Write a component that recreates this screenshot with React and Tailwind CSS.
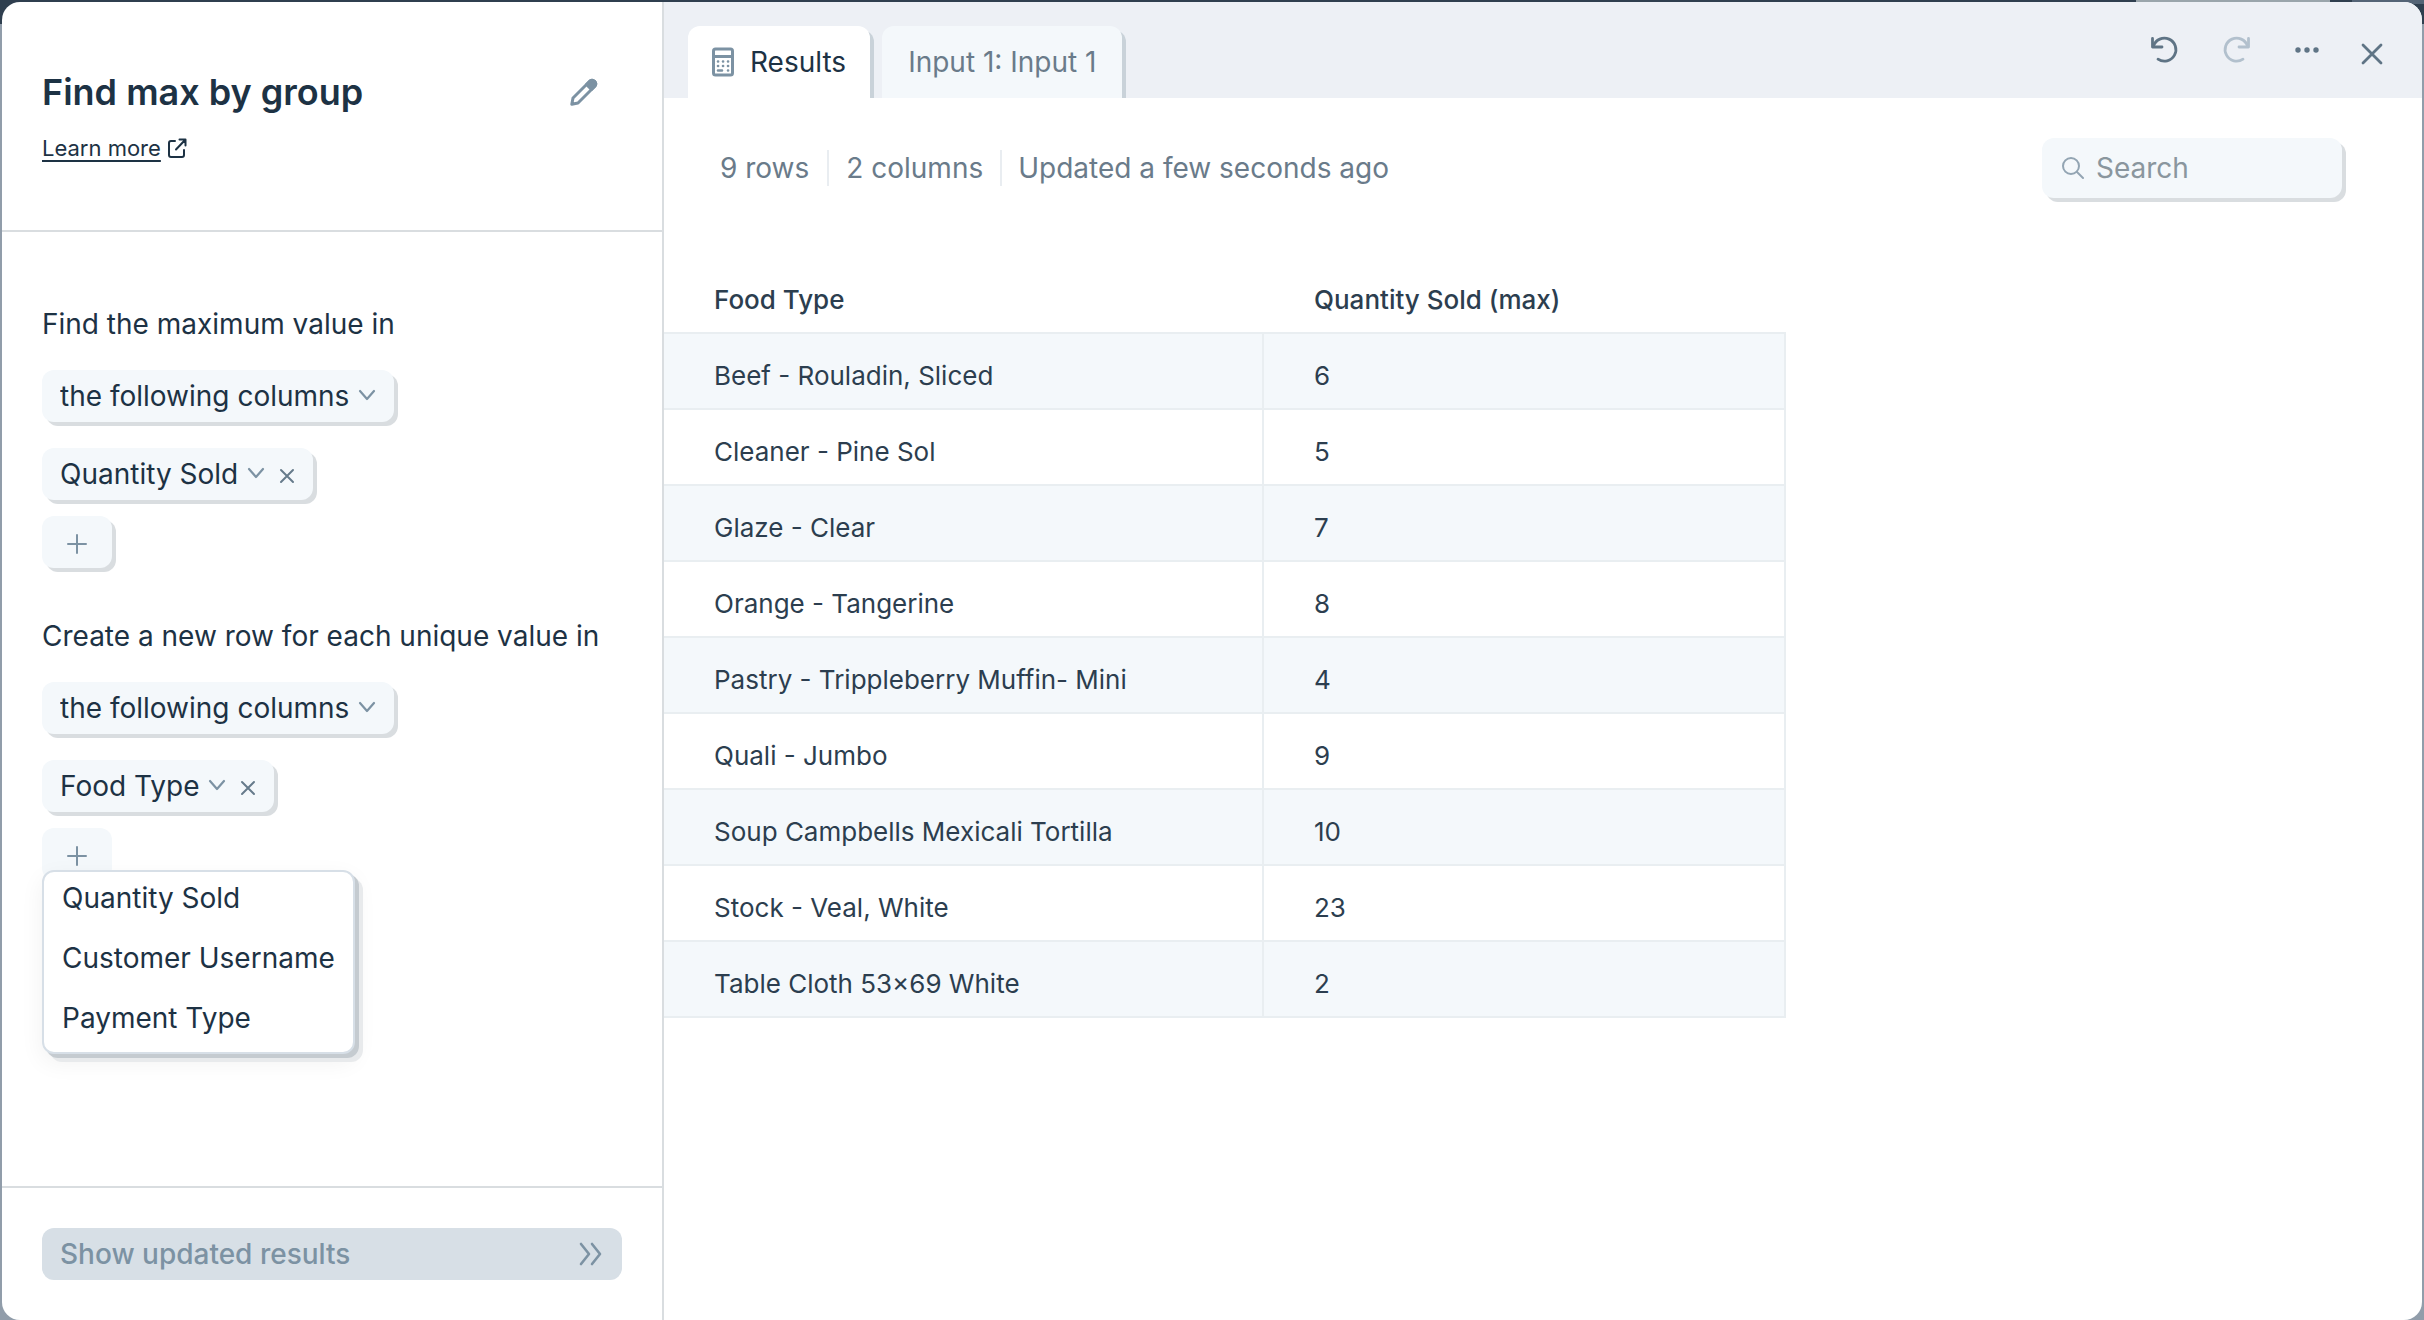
import { useState } from "react";

const rows = [
  ["Beef - Rouladin, Sliced", 6],
  ["Cleaner - Pine Sol", 5],
  ["Glaze - Clear", 7],
  ["Orange - Tangerine", 8],
  ["Pastry - Trippleberry Muffin- Mini", 4],
  ["Quali - Jumbo", 9],
  ["Soup Campbells Mexicali Tortilla", 10],
  ["Stock - Veal, White", 23],
  ["Table Cloth 53×69 White", 2],
];

function Icon({ className = "", width, height, strokeWidth = 2, children }) {
  return (
    <svg
      className={className}
      width={width}
      height={height}
      viewBox={`0 0 ${width} ${height}`}
      fill="none"
      stroke="currentColor"
      strokeWidth={strokeWidth}
      strokeLinecap="round"
      strokeLinejoin="round"
      aria-hidden="true"
    >
      {children}
    </svg>
  );
}

const Chevron = () => (
  <Icon className="pointer-events-none text-[#7c92a3]" width={18} height={14} strokeWidth={2.2}>
    <path d="M2 2l7 8 7-8" />
  </Icon>
);

const PlusIcon = () => (
  <Icon className="text-[#7c92a3]" width={20} height={20}>
    <path d="M10 1v18M1 10h18" />
  </Icon>
);

// Rounded chip holding a dropdown, and a remove button when it can be removed
function Pill({ label, value, onRemove }) {
  return (
    <div className="flex h-[52px] items-center gap-2 rounded-xl bg-[#f4f8fb] px-[18px] shadow-[4px_4px_0_#d9dde0]">
      <select aria-label={label} className="appearance-none bg-transparent leading-10 outline-none">
        <option>{value}</option>
      </select>
      <Chevron />
      {onRemove && (
        <button type="button" aria-label={`Remove ${value}`} onClick={onRemove} className="pt-1 pl-1.5 text-[#667b8b]">
          <Icon width={16} height={16}>
            <path d="M2 2l12 12M14 2L2 14" />
          </Icon>
        </button>
      )}
    </div>
  );
}

function AddButton({ label, open, onClick, children }) {
  return (
    <div className="relative">
      <button
        type="button"
        aria-label={label}
        aria-expanded={open}
        onClick={onClick}
        className={`flex h-[52px] w-[70px] items-center justify-center rounded-xl bg-[#f4f8fb] pt-1 ${
          open ? "" : "shadow-[4px_4px_0_#d9dde0]"
        }`}
      >
        <PlusIcon />
      </button>
      {children}
    </div>
  );
}

function ColumnPicker({ title, column, menu }) {
  const [columns, setColumns] = useState([column]);
  const [open, setOpen] = useState(Boolean(menu));

  return (
    <section className="flex flex-col items-start">
      <h2 className="leading-10">{title}</h2>
      <div className="mt-[26px] flex flex-col items-start gap-[26px]">
        <Pill label={title} value="the following columns" />
        {columns.map((c) => (
          <Pill key={c} label="Column" value={c} onRemove={() => setColumns(columns.filter((x) => x !== c))} />
        ))}
      </div>
      <div className="mt-4">
        <AddButton label="Add column" open={open} onClick={() => setOpen((v) => !v)}>
          {menu && open && (
            <ul
              role="menu"
              className="absolute top-[42px] left-0 z-10 flex flex-col gap-5 rounded-xl border-2 border-[#d7dfe7] bg-white px-[18px] pt-1.5 pb-3.5 whitespace-nowrap shadow-[4px_4px_0_#c5cbd0,8px_8px_0_#e8eaec,0_8px_24px_rgba(0,0,0,0.06)]"
            >
              {menu.map((m) => (
                <li key={m} role="none">
                  <button type="button" role="menuitem" className="block leading-10">
                    {m}
                  </button>
                </li>
              ))}
            </ul>
          )}
        </AddButton>
      </div>
    </section>
  );
}

function Sidebar() {
  return (
    <aside className="flex w-[662px] shrink-0 flex-col border-r-2 border-[#d9dde0]">
      <header className="flex h-[230px] items-start justify-between border-b-2 border-[#d9dde0] pt-[66px] pr-16 pl-10">
        <div>
          <h1 className="text-[36px] leading-[48px] font-semibold">Find max by group</h1>
          <a href="#learn" className="mt-[18px] flex items-center gap-1.5 text-[22px] leading-7">
            <span className="underline decoration-2 underline-offset-4">Learn more</span>
            <Icon width={20} height={20}>
              <path d="M8 3H4a2 2 0 0 0-2 2v12a2 2 0 0 0 2 2h11a2 2 0 0 0 2-2v-5" />
              <path d="M12.5 1.5H18.5V7.5M18.5 1.5L9 11.5" />
            </Icon>
          </a>
        </div>
        <button type="button" aria-label="Rename step" className="mt-2.5 text-[#7c92a3]">
          <Icon width={28} height={28} strokeWidth={3}>
            <path d="M1.8 26.2L3 20 20 3a3.600 3.600 0 0 1 5 5L8 25z" />
            <path d="M16.5 6.500L20 3a3.600 3.600 0 0 1 5 5l-3.500 3.500z" fill="currentColor" />
          </Icon>
        </button>
      </header>

      <div className="flex flex-1 flex-col gap-12 px-10 pt-[72px]">
        <ColumnPicker title="Find the maximum value in" column="Quantity Sold" />
        <ColumnPicker
          title="Create a new row for each unique value in"
          column="Food Type"
          menu={["Quantity Sold", "Customer Username", "Payment Type"]}
        />
      </div>

      <footer className="border-t-2 border-[#d9dde0] p-10">
        <button
          type="button"
          className="flex h-[52px] w-full items-center justify-between rounded-xl bg-[#d7dfe6] px-[18px] font-medium text-[#7c92a3]"
        >
          Show updated results
          <Icon width={26} height={24} strokeWidth={2.6}>
            <path d="M3 2l8 10-8 10M14 2l8 10-8 10" />
          </Icon>
        </button>
      </footer>
    </aside>
  );
}

function TopBar() {
  return (
    <div className="flex h-24 items-end justify-between bg-[#edf0f5] pr-[38px] pl-6">
      <div role="tablist" className="flex gap-3 overflow-hidden pr-1">
        <button
          type="button"
          role="tab"
          aria-selected="true"
          className="flex h-[72px] items-center gap-4 rounded-t-xl bg-white px-6 shadow-[4px_4px_0_#c9d2d9]"
        >
          <Icon className="text-[#7c92a3]" width={22} height={30} strokeWidth={3}>
            <rect x="1.5" y="2" width="19" height="26" rx="2" />
            <path d="M2 9.5h18" />
            <path d="M6 14.5h.1M11 14.5h.1M16 14.5h.1M6 19h.1M11 19h.1M16 19h.1M6 23.5h4M16 23.5h.1" strokeWidth="2.6" />
          </Icon>
          Results
        </button>
        <button
          type="button"
          role="tab"
          aria-selected="false"
          className="h-[72px] rounded-t-xl bg-[#f4f8fb] px-[26px] text-[#6a7b8a] shadow-[4px_4px_0_#c9d2d9]"
        >
          Input 1: Input 1
        </button>
      </div>

      <div className="flex items-center gap-9 self-start pt-8 text-[#5f7485]">
        <div className="flex gap-10">
          <button type="button" aria-label="Undo">
            <Icon width={32} height={32} strokeWidth={2.8}>
              <path d="M4.5 4.5v8.500h9.500" />
              <path d="M5.5 12A11.5 11.5 0 1 1 10 25.2" />
            </Icon>
          </button>
          <button type="button" aria-label="Redo" className="text-[#b2c0cd]">
            <Icon width={32} height={32} strokeWidth={2.8}>
              <path d="M28.5 4.5v8.500h-9.500" />
              <path d="M27.5 12A11.5 11.5 0 1 0 23 25.2" />
            </Icon>
          </button>
          <button type="button" aria-label="More">
            <svg width="32" height="32" viewBox="0 0 32 32" fill="currentColor" aria-hidden="true">
              <circle cx="6" cy="16" r="2.7" />
              <circle cx="15" cy="16" r="2.7" />
              <circle cx="24" cy="16" r="2.7" />
            </svg>
          </button>
        </div>
        <button type="button" aria-label="Close" className="pt-2">
          <Icon width={24} height={24} strokeWidth={2.8}>
            <path d="M3 3l18 18M21 3L3 21" />
          </Icon>
        </button>
      </div>
    </div>
  );
}

function Results() {
  return (
    <main className="flex min-w-0 flex-1 flex-col">
      <TopBar />

      <div className="flex items-center justify-between pt-10 pr-20 pl-14">
        <div className="flex h-9 items-center text-[#6a7b8a]">
          <span className="border-r-2 border-[#e9edf1] pr-[18px]">9 rows</span>
          <span className="border-r-2 border-[#e9edf1] px-[17px]">2 columns</span>
          <span className="pl-4">Updated a few seconds ago</span>
        </div>
        <label className="flex h-[60px] w-[300px] items-center gap-3 rounded-xl bg-[#f4f8fb] px-[18px] shadow-[4px_4px_0_#d9dde0]">
          <Icon className="shrink-0 text-[#93a5b3]" width={24} height={24}>
            <circle cx="11" cy="10" r="8" />
            <path d="M17 16l6 6" />
          </Icon>
          <input
            type="search"
            aria-label="Search"
            placeholder="Search"
            className="w-full min-w-0 bg-transparent outline-none placeholder:text-[#8a969e]"
          />
        </label>
      </div>

      <table className="mt-[72px] w-[1122px] table-fixed border-separate border-spacing-0 text-left text-[26px] leading-8 text-[#2c3e4f]">
        <thead>
          <tr className="h-16">
            <th className="w-[600px] border-b-2 border-[#e9eef1] pb-0.5 pl-[50px] font-medium">Food Type</th>
            <th className="border-b-2 border-[#e9eef1] pb-0.5 pl-[50px] font-medium">Quantity Sold (max)</th>
          </tr>
        </thead>
        <tbody>
          {rows.map(([name, qty]) => (
            <tr key={name} className="h-[76px] odd:bg-[#f4f8fb]">
              <td className="border-r-2 border-b-2 border-[#e9eef1] pt-2.5 pl-[50px]">{name}</td>
              <td className="border-r-2 border-b-2 border-[#e9eef1] pt-2.5 pl-[50px]">{qty}</td>
            </tr>
          ))}
        </tbody>
      </table>
    </main>
  );
}

export default function App() {
  return (
    <div className="relative flex min-h-screen flex-col bg-[#919daa] font-['Inter',sans-serif] text-[28px] leading-9">
      {/* App bar behind the dialog */}
      <div className="flex h-6 items-start justify-end bg-[#2f3f4f]">
        <div className="mr-[22px] h-1 w-[194px] bg-[#9aa5ab]" />
        <div className="h-1 w-[72px] bg-[#546476]" />
      </div>
      <div
        role="dialog"
        aria-label="Find max by group"
        className="absolute inset-x-0.5 top-0.5 bottom-0 flex overflow-hidden rounded-[18px] bg-white text-[#1d3244]"
      >
        <Sidebar />
        <Results />
      </div>
    </div>
  );
}
